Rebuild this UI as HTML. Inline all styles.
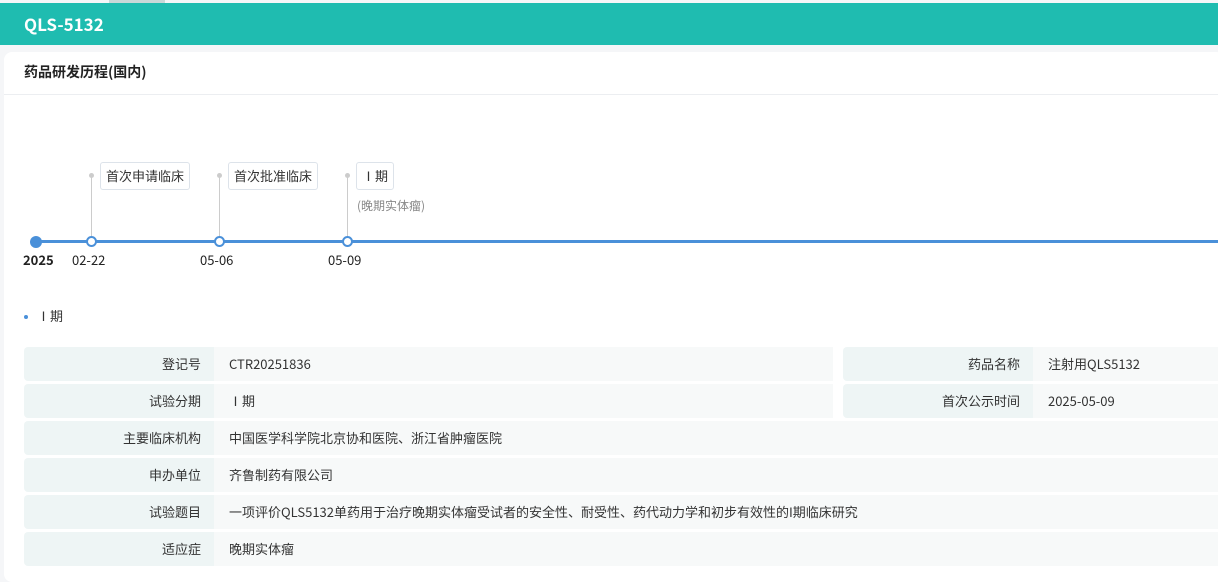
<!DOCTYPE html><html><head><meta charset="utf-8"><style>
*{margin:0;padding:0;box-sizing:border-box}
body{width:1218px;height:575px;overflow:hidden;background:#f5f6f8;font-family:"Noto Sans CJK SC","Liberation Sans",sans-serif;color:#333;position:relative;font-size:13px;line-height:1.2}
.a{position:absolute}
.hdr{left:0;top:3px;width:1218px;height:42px;background:#1fbcb0;color:#fff;font-weight:bold;font-size:17px;line-height:42px;padding-left:24px}
.card{left:4px;top:52px;width:1220px;height:530px;background:#fff;border-radius:8px}
.tag{top:162px;height:28px;border:1px solid #dde3ea;border-radius:3px;background:#fff;font-size:13px;line-height:26px;padding:0 5px;color:#333}
.vl{width:1px;background:#ccc;top:175px;height:64px}
.dot{width:5px;height:5px;border-radius:50%;background:#ccc;top:173px}
.ring{width:11px;height:11px;border-radius:50%;border:2.5px solid #4a90d9;background:#fff;top:236px}
.dt{top:252px;font-size:13px;color:#222}
.l{background:#eef5f5;border-radius:4px 0 0 4px;text-align:right;padding-right:13px;height:34px;line-height:34px;font-size:13px}
.v{background:#f7f9f9;padding-left:15px;height:34px;line-height:34px;font-size:13px}
</style></head><body>
<div class="a" style="left:109px;top:0;width:56px;height:3px;background:#c9d8d8"></div>
<div class="a hdr">QLS-5132</div>
<div class="a card"></div>
<div class="a" style="left:24px;top:64px;font-weight:bold;font-size:14px;color:#222">药品研发历程(国内)</div>
<div class="a" style="left:4px;top:94px;width:1214px;height:1px;background:#eceef1"></div>
<div class="a" style="left:36px;top:240px;width:1182px;height:3px;background:#4a90d9"></div>
<div class="a" style="left:30px;top:236px;width:12px;height:12px;border-radius:50%;background:#4a90d9"></div>
<div class="a vl" style="left:91px"></div><div class="a dot" style="left:89px"></div>
<div class="a vl" style="left:219px"></div><div class="a dot" style="left:217px"></div>
<div class="a vl" style="left:347px"></div><div class="a dot" style="left:345px"></div>
<div class="a tag" style="left:100px">首次申请临床</div>
<div class="a tag" style="left:228px">首次批准临床</div>
<div class="a tag" style="left:356px">Ⅰ期</div>
<div class="a" style="left:357px;top:199px;font-size:12px;color:#888">(晚期实体瘤)</div>
<div class="a ring" style="left:86px"></div>
<div class="a ring" style="left:214px"></div>
<div class="a ring" style="left:342px"></div>
<div class="a dt" style="left:23px;font-weight:bold">2025</div>
<div class="a dt" style="left:72px">02-22</div>
<div class="a dt" style="left:200px">05-06</div>
<div class="a dt" style="left:328px">05-09</div>
<div class="a" style="left:24px;top:315px;width:4px;height:4px;border-radius:50%;background:#4a90d9"></div>
<div class="a" style="left:37px;top:308px;font-size:13px">Ⅰ期</div>

<div class="a l" style="left:24px;top:347px;width:190px">登记号</div><div class="a v" style="left:214px;top:347px;width:619px">CTR20251836</div>
<div class="a l" style="left:843px;top:347px;width:190px">药品名称</div><div class="a v" style="left:1033px;top:347px;width:185px">注射用QLS5132</div>
<div class="a l" style="left:24px;top:384px;width:190px">试验分期</div><div class="a v" style="left:214px;top:384px;width:619px">Ⅰ期</div>
<div class="a l" style="left:843px;top:384px;width:190px">首次公示时间</div><div class="a v" style="left:1033px;top:384px;width:185px">2025-05-09</div>
<div class="a l" style="left:24px;top:421px;width:190px">主要临床机构</div><div class="a v" style="left:214px;top:421px;width:1004px">中国医学科学院北京协和医院、浙江省肿瘤医院</div>
<div class="a l" style="left:24px;top:458px;width:190px">申办单位</div><div class="a v" style="left:214px;top:458px;width:1004px">齐鲁制药有限公司</div>
<div class="a l" style="left:24px;top:495px;width:190px">试验题目</div><div class="a v" style="left:214px;top:495px;width:1004px">一项评价QLS5132单药用于治疗晚期实体瘤受试者的安全性、耐受性、药代动力学和初步有效性的I期临床研究</div>
<div class="a l" style="left:24px;top:532px;width:190px">适应症</div><div class="a v" style="left:214px;top:532px;width:1004px">晚期实体瘤</div>
</body></html>
